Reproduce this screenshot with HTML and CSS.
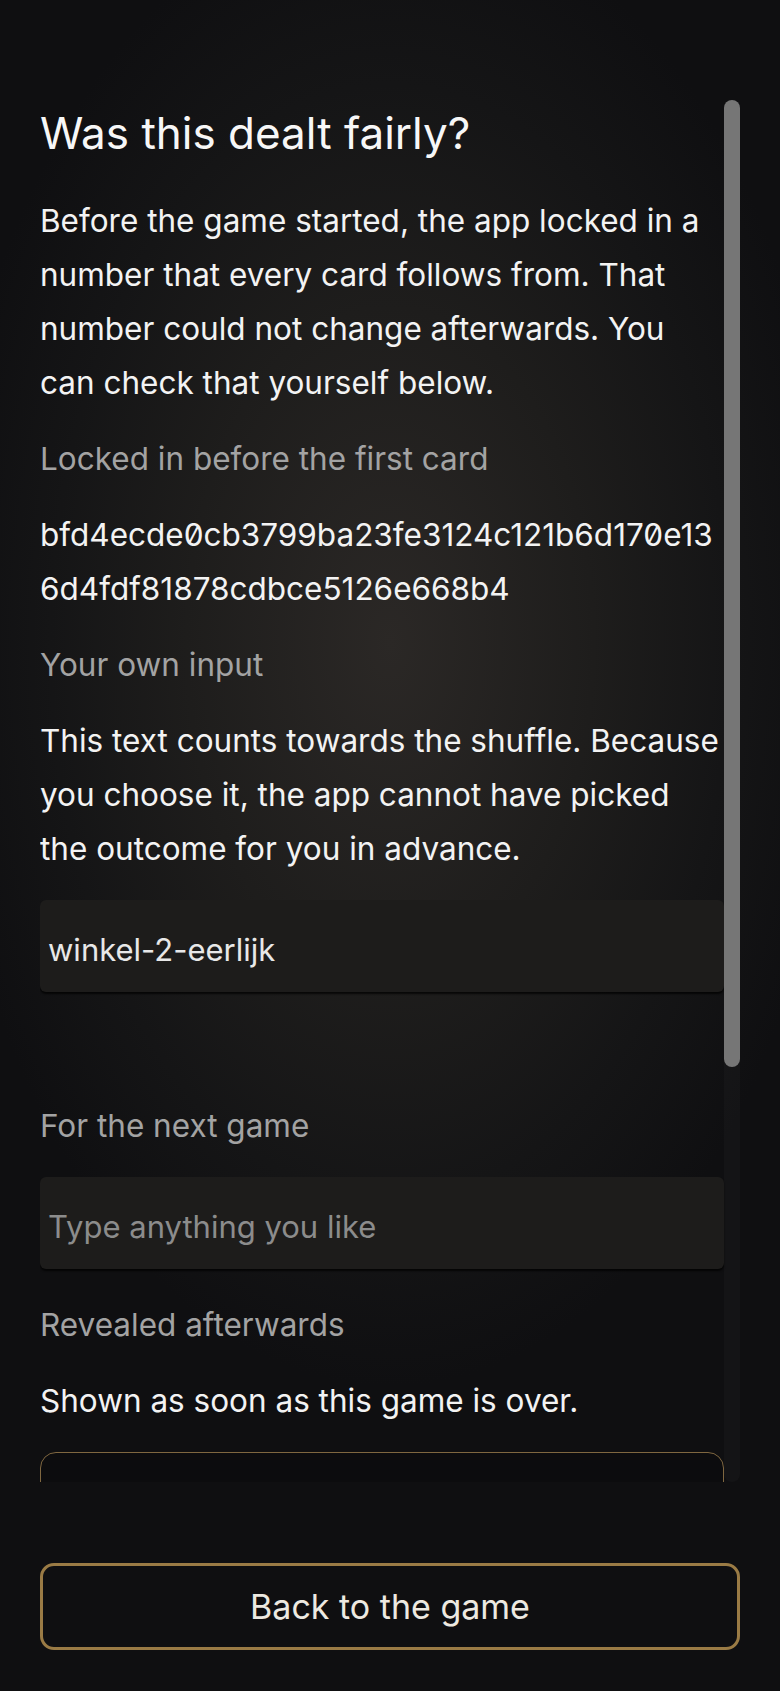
FILE: index.html
```html
<!DOCTYPE html>
<html lang="en">
<head>
<meta charset="utf-8">
<meta name="viewport" content="width=device-width, initial-scale=1">
<title>Was this dealt fairly?</title>
<link rel="stylesheet" href="styles.css">
</head>
<body>
<main class="sheet">
  <div class="viewport">
    <div class="scroll">
      <h1 class="title">Was this dealt fairly?</h1>
      <p class="text intro">Before the game started, the app locked in a number that every card follows from. That number could not change afterwards. You can check that yourself below.</p>
      <p class="label">Locked in before the first card</p>
      <p class="hash">bfd4ecde0cb3799ba23fe3124c121b6d170e136d4fdf81878cdbce5126e668b4</p>
      <p class="label">Your own input</p>
      <p class="text">This text counts towards the shuffle. Because you choose it, the app cannot have picked the outcome for you in advance.</p>
      <input class="field" type="text" value="winkel-2-eerlijk" readonly>
      <p class="label next">For the next game</p>
      <input class="field" type="text" placeholder="Type anything you like">
      <p class="label revealed">Revealed afterwards</p>
      <p class="text">Shown as soon as this game is over.</p>
      <div class="reveal"></div>
    </div>
    <div class="scrollbar" aria-hidden="true"><div class="thumb"></div></div>
  </div>
  <button class="back" type="button">Back to the game</button>
</main>
</body>
</html>
```
FILE: styles.css
```css
html, body {
  margin: 0;
  height: 100%;
}

body {
  background:
    radial-gradient(ellipse 58% 44% at 50% 38%, #2b2826 0%, #1e1d1c 45%, #151516 75%, #0f0f11 100%),
    #0f0f11;
  color: #f3f3f3;
  font-family: Inter, "Noto Sans", "Liberation Sans", sans-serif;
}

.sheet {
  box-sizing: border-box;
  height: 100vh;
  display: flex;
  flex-direction: column;
  padding: 100px 40px 41px;
}

.viewport {
  flex: 1;
  min-height: 0;
  position: relative;
  display: flex;
}

.scroll {
  flex: 1;
  min-width: 0;
  overflow-y: auto;
  scrollbar-width: none;
  padding-right: 16px;
  display: flex;
  flex-direction: column;
  gap: 22px;
}

.scroll::-webkit-scrollbar {
  display: none;
}

.scrollbar {
  position: absolute;
  top: 0;
  right: 0;
  bottom: 0;
  width: 16px;
  border-radius: 8px;
  background: rgba(255, 255, 255, 0.025);
}

.thumb {
  height: 70%;
  border-radius: 8px;
  background: #767676;
}

.title {
  margin: 7px 0 0;
  font-size: 44px;
  font-weight: 400;
  line-height: 53px;
  color: #f7f7f7;
}

.text,
.label,
.hash {
  margin: 0;
  font-size: 31.5px;
  line-height: 54px;
}

.intro {
  margin-top: 12px;
}

.label {
  color: #a3a3a3;
}

.hash {
  word-break: break-all;
  font-variant-numeric: slashed-zero;
  font-feature-settings: "zero" 1;
  color: #f3f3f3;
}

.field {
  flex: none;
  box-sizing: border-box;
  width: 100%;
  height: 92px;
  margin: 2px 0 0;
  padding: 6px 8px 0;
  border: none;
  border-radius: 6px;
  background: #1d1c1b;
  box-shadow: 0 2px 2px rgba(0, 0, 0, 0.75);
  color: #e8e8e8;
  font-family: inherit;
  font-size: 31px;
  outline: none;
}

.field::placeholder {
  color: #8c8c8c;
}

.label.next {
  margin-top: 85px;
}

.label.revealed {
  margin-top: 7px;
}

.reveal {
  flex: none;
  box-sizing: border-box;
  height: 600px;
  margin-top: 2px;
  margin-bottom: 24px;
  border: 1.5px solid #7f6740;
  border-radius: 16px;
  background: rgba(8, 8, 10, 0.45);
}

.back {
  flex: none;
  height: 87px;
  margin-top: 81px;
  border: 3px solid #9a7b45;
  border-radius: 14px;
  background: transparent;
  color: #ede9e1;
  font-family: inherit;
  font-size: 34px;
  cursor: pointer;
}
```
